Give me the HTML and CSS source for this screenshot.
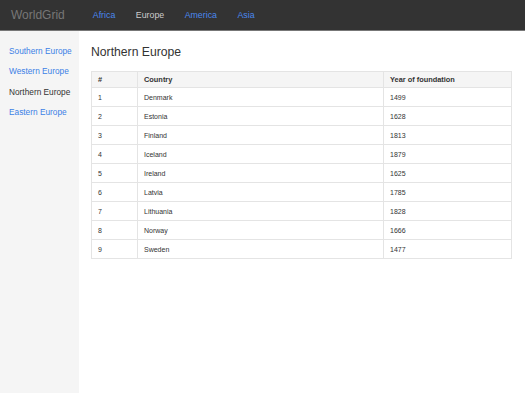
FILE: index.html
```html
<!DOCTYPE html>
<html lang="en">
<head>
    <meta charset="UTF-8">
    <meta name="viewport" content="width=device-width, initial-scale=1.0">
    <title>WorldGrid - Northern Europe</title>
    <link rel="stylesheet" href="styles.css">
</head>
<body>
    <nav class="navbar">
        <a class="brand" href="#">WorldGrid</a>
        <ul class="nav">
            <li><a href="#">Africa</a></li>
            <li class="active"><a href="#">Europe</a></li>
            <li><a href="#">America</a></li>
            <li><a href="#">Asia</a></li>
        </ul>
    </nav>
    <div class="layout">
        <aside class="sidebar">
            <ul class="side-nav">
                <li><a href="#">Southern Europe</a></li>
                <li><a href="#">Western Europe</a></li>
                <li class="active"><a href="#">Northern Europe</a></li>
                <li><a href="#">Eastern Europe</a></li>
            </ul>
        </aside>
        <main class="content">
            <h1>Northern Europe</h1>
            <table class="grid">
                <thead>
                    <tr><th class="col-num">#</th><th class="col-country">Country</th><th>Year of foundation</th></tr>
                </thead>
                <tbody>
                    <tr><td>1</td><td>Denmark</td><td>1499</td></tr>
                    <tr><td>2</td><td>Estonia</td><td>1628</td></tr>
                    <tr><td>3</td><td>Finland</td><td>1813</td></tr>
                    <tr><td>4</td><td>Iceland</td><td>1879</td></tr>
                    <tr><td>5</td><td>Ireland</td><td>1625</td></tr>
                    <tr><td>6</td><td>Latvia</td><td>1785</td></tr>
                    <tr><td>7</td><td>Lithuania</td><td>1828</td></tr>
                    <tr><td>8</td><td>Norway</td><td>1666</td></tr>
                    <tr><td>9</td><td>Sweden</td><td>1477</td></tr>
                </tbody>
            </table>
        </main>
    </div>
</body>
</html>
```

FILE: styles.css
```css
body {
    font-family: "Liberation Sans", Arial, sans-serif;
    color: #333;
    margin: 0;
    background-color: #fff;
}
a {
    text-decoration: none;
    color: #3b7fe6;
}
ul {
    list-style: none;
    margin: 0;
    padding: 0;
}
.navbar {
    display: flex;
    align-items: center;
    height: 30px;
    background-color: #333;
    border-bottom: 1px solid #777;
}
.brand {
    font-size: 12px;
    color: #777;
    padding: 0 28px 0 11px;
}
.nav {
    display: flex;
    gap: 20.5px;
}
.nav li a {
    display: block;
    font-size: 8.8px;
    line-height: 30px;
    color: #4a88ee;
}
.nav .active a {
    color: #ccc;
}
.layout {
    display: flex;
    min-height: 362px;
}
.sidebar {
    width: 79px;
    flex-shrink: 0;
    background-color: #f5f5f5;
    padding-top: 10px;
}
.side-nav a {
    display: block;
    font-size: 8.3px;
    line-height: 10px;
    padding: 5px 0 5.3px 9px;
}
.side-nav .active a {
    color: #333;
}
.content {
    flex: 1;
    padding: 13px 13px 0 12px;
}
h1 {
    font-size: 12.2px;
    font-weight: normal;
    margin: 0 0 11px;
    line-height: 16px;
}
.grid {
    width: 421px;
    border-collapse: collapse;
    font-size: 7px;
}
.grid th,
.grid td {
    border: 1px solid #e4e4e4;
    text-align: left;
    padding: 0 6px;
}
.grid th {
    height: 15px;
    font-weight: bold;
    font-size: 7.4px;
    background-color: #f5f5f5;
}
.grid td {
    height: 18px;
}
.col-num {
    width: 33px;
}
.col-country {
    width: 233px;
}
```
